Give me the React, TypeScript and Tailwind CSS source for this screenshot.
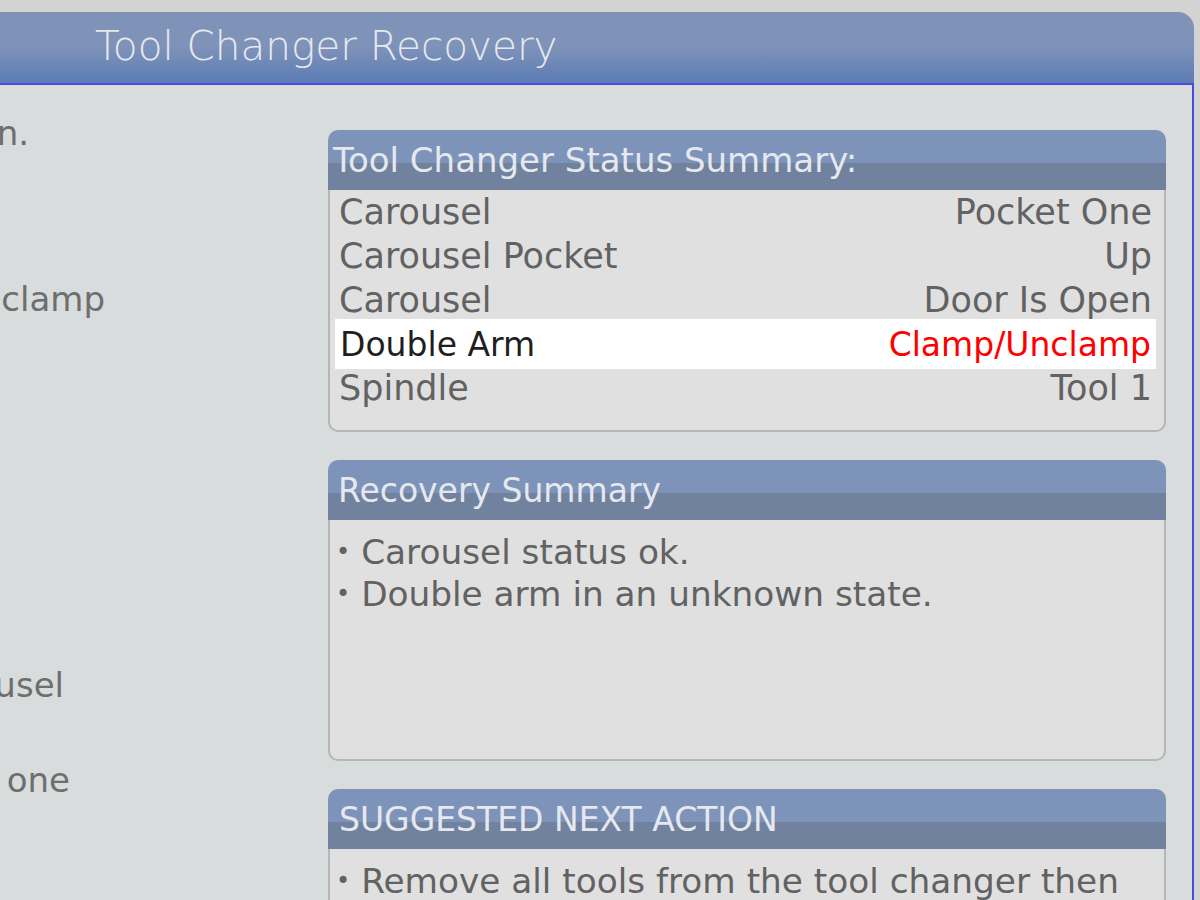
const font = "font-['DejaVu_Sans',_'Liberation_Sans',_sans-serif]";

const statusRows = [
  { label: "Carousel", value: "Pocket One" },
  { label: "Carousel Pocket", value: "Up" },
  { label: "Carousel", value: "Door Is Open" },
  { label: "Double Arm", value: "Clamp/Unclamp", alert: true },
  { label: "Spindle", value: "Tool 1" },
];

const PanelHeader = ({ title, cls }: { title: string; cls: string }) => {
  return (
    <div className={`flex h-[60px] items-center rounded-t-[10px] bg-[linear-gradient(to_bottom,#7e93b9_0%,#7e93b9_55%,#71829f_55%,#71829f_100%)] leading-none text-[#e5e8ee] ${cls}`}>
      {title}
    </div>
  );
};

const Bullet = ({ text }: { text: string }) => {
  return (
    <div className="flex h-[42px] items-center gap-[11px] whitespace-nowrap">
      <span className="text-[24px]">•</span>
      <span>{text}</span>
    </div>
  );
};

const LeftLine = ({ text, end, className }: { text: string; end: string; className: string }) => {
  return (
    <div className={`flex h-[42px] items-center justify-end whitespace-nowrap ${end} ${className}`}>
      {text}
    </div>
  );
};

export default function App() {
  return (
    <div className={`flex h-[900px] w-[1200px] flex-col overflow-hidden bg-[#d3d3d3] pt-[12px] ${font}`}>
      <div className="mr-[6px] flex flex-1 flex-col overflow-hidden rounded-tr-[16px]">
        <div className="flex h-[73px] shrink-0 items-center border-b-2 border-[#4a4ae2] bg-[linear-gradient(to_bottom,#7f93b9_0%,#7f93b9_48%,#5b7cb4_100%)] pb-[2px] pl-[95px] text-[40.5px] font-extralight leading-none text-[#e6e8ee]">
          Tool Changer Recovery
        </div>
        <div className="flex flex-1 border-r-2 border-[#4a4ae2] bg-[#d9dcdd] text-[34px] leading-none">
          {/* left instruction list, scrolled partly out of view */}
          <div className="flex w-[328px] shrink-0 flex-col text-[#6e6e6e]">
            <LeftLine text="Carousel door is open." end="w-[29px]" className="mt-[27px]" />
            <LeftLine text="Double Arm Clamp/Unclamp" end="w-[105px]" className="mt-[124px]" />
            <LeftLine text="Rotate carousel" end="w-[64px]" className="mt-[344px]" />
            <LeftLine text="Move to pocket one" end="w-[70px]" className="mt-[53px]" />
          </div>

          <div className="flex w-[838px] shrink-0 flex-col gap-[28px] pt-[45px]">
            <div>
              <PanelHeader title="Tool Changer Status Summary:" cls="px-[5px] text-[34px]" />
              <div className="h-[242px] rounded-b-[10px] border-2 border-t-0 border-[#b6b6b6] bg-[#e0e0e0] pl-[5px] pr-[8px] text-[35px]">
                {statusRows.map((row, i) =>
                  row.alert ? (
                    <div key={i} className="-my-[3px] flex h-[50px] items-center justify-between bg-white px-[5px] text-[33px]">
                      <span className="text-[#1f1f1f]">{row.label}</span>
                      <span className="text-[#ff0000]">{row.value}</span>
                    </div>
                  ) : (
                    <div key={i} className="flex h-[44px] items-center justify-between px-[4px] text-[#626262]">
                      <span>{row.label}</span>
                      <span>{row.value}</span>
                    </div>
                  )
                )}
              </div>
            </div>

            <div>
              <PanelHeader title="Recovery Summary" cls="px-[10px] text-[33px]" />
              <div className="h-[241px] rounded-b-[10px] border-2 border-t-0 border-[#b6b6b6] bg-[#e0e0e0] px-[6px] pt-[11px] text-[34.3px] text-[#626262]">
                <Bullet text="Carousel status ok." />
                <Bullet text="Double arm in an unknown state." />
              </div>
            </div>

            <div>
              <PanelHeader title="SUGGESTED NEXT ACTION" cls="px-[11px] text-[33px]" />
              <div className="h-[241px] rounded-b-[10px] border-2 border-t-0 border-[#b6b6b6] bg-[#e0e0e0] px-[6px] pt-[11px] text-[34.3px] text-[#626262]">
                <Bullet text="Remove all tools from the tool changer then" />
              </div>
            </div>
          </div>
        </div>
      </div>
    </div>
  );
}
